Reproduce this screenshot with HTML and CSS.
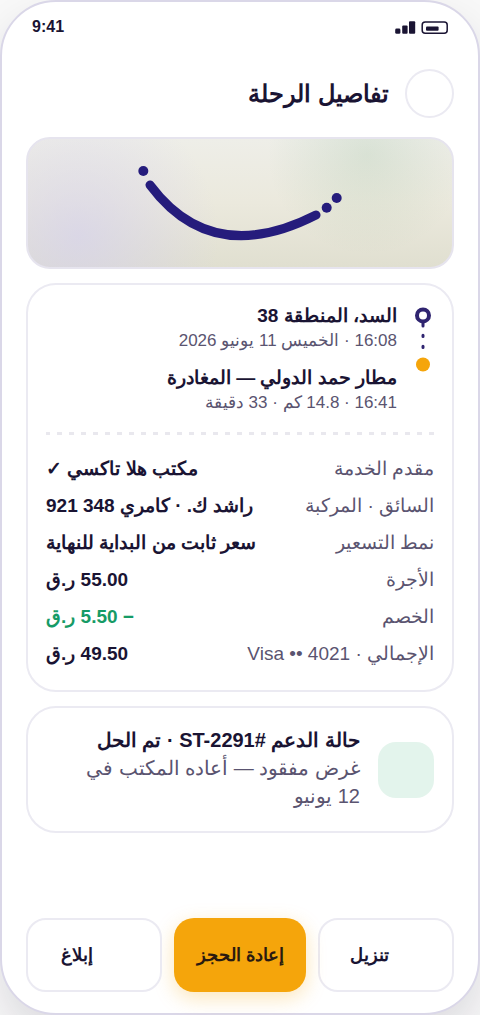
FILE: index.html
```html
<!DOCTYPE html>
<html lang="ar" dir="rtl">
<head>
<meta charset="utf-8">
<meta name="viewport" content="width=device-width, initial-scale=1">
<title>تفاصيل الرحلة</title>
<link rel="stylesheet" href="styles.css">
</head>
<body>
<div class="phone">
  <div class="status" dir="ltr">
    <span class="status-time">9:41</span>
    <svg class="status-icons" width="54" height="14" viewBox="0 0 54 14" aria-hidden="true">
      <rect x="1.2" y="8.6" width="5.2" height="5.2" rx="1.4"/>
      <rect x="8.2" y="5.6" width="5.4" height="8.2" rx="1"/>
      <rect x="15" y="1.2" width="6.2" height="12.6" rx="1"/>
      <rect x="28.2" y="2" width="25" height="11.2" rx="3" class="battery"/>
      <rect x="32" y="6.4" width="12.6" height="4.4" rx="1"/>
    </svg>
  </div>
  <header class="header">
    <button class="back" type="button" aria-label="رجوع"></button>
    <h1 class="title">تفاصيل الرحلة</h1>
  </header>
  <main class="content">
    <div class="map">
      <svg class="route" width="210" height="80" viewBox="0 0 210 80" aria-hidden="true">
        <path d="M15 22Q77 105 181 52" class="route-line"/>
        <circle cx="8.3" cy="8" r="5"/>
        <circle cx="191.7" cy="44.7" r="5"/>
        <circle cx="201.7" cy="35" r="5"/>
      </svg>
    </div>
    <section class="card">
      <div class="trip">
        <svg class="rail" width="22" height="68" viewBox="0 0 22 68" aria-hidden="true">
          <path d="M11 17v4M11 30.3v1.2M11 41.3v1.2" class="rail-dash"/>
          <circle cx="11" cy="10.4" r="6" class="rail-start"/>
          <circle cx="11" cy="59.5" r="7" class="rail-end"/>
        </svg>
        <div class="stops">
          <div class="stop">
            <p class="stop-name">السد، المنطقة 38</p>
            <p class="stop-meta">16:08 · الخميس 11 يونيو 2026</p>
          </div>
          <div class="stop">
            <p class="stop-name">مطار حمد الدولي — المغادرة</p>
            <p class="stop-meta">16:41 · 14.8 كم · 33 دقيقة</p>
          </div>
        </div>
      </div>
      <div class="divider"></div>
      <dl class="facts">
        <div class="fact"><dt>مقدم الخدمة</dt><dd>مكتب هلا تاكسي ✓</dd></div>
        <div class="fact"><dt>السائق · المركبة</dt><dd>راشد ك. · كامري <bdi>921 348</bdi></dd></div>
        <div class="fact"><dt>نمط التسعير</dt><dd>سعر ثابت من البداية للنهاية</dd></div>
        <div class="fact"><dt>الأجرة</dt><dd>55.00 ر.ق</dd></div>
        <div class="fact"><dt>الخصم</dt><dd class="discount">− 5.50 ر.ق</dd></div>
        <div class="fact"><dt>الإجمالي · <bdi>Visa •• 4021</bdi></dt><dd>49.50 ر.ق</dd></div>
      </dl>
    </section>
    <section class="card support">
      <span class="support-icon"></span>
      <div>
        <h2 class="support-title">حالة الدعم <bdi dir="ltr">ST-2291#</bdi> · تم الحل</h2>
        <p class="support-text">غرض مفقود — أعاده المكتب في 12&nbsp;يونيو</p>
      </div>
    </section>
  </main>
  <footer class="actions">
    <button class="btn btn-ghost" type="button"><span class="btn-icon"></span>تنزيل</button>
    <button class="btn btn-primary" type="button">إعادة الحجز</button>
    <button class="btn btn-ghost" type="button"><span class="btn-icon"></span>إبلاغ</button>
  </footer>
</div>
</body>
</html>
```
FILE: styles.css
```css
* {
  box-sizing: border-box;
}

body {
  margin: 0;
  background: #f8f8f8;
  color: #1a1433;
  font-family: "Liberation Sans", sans-serif;
}

h1, h2, p, dl, dd {
  margin: 0;
}

.phone {
  display: flex;
  flex-direction: column;
  min-height: 100vh;
  padding: 0 24px 21px;
  border: 2px solid #dad7e8;
  border-radius: 56px;
  background: #fff;
  box-shadow: 0 20px 40px rgba(26, 20, 51, 0.12);
}

.status {
  display: flex;
  align-items: center;
  justify-content: space-between;
  height: 50px;
  padding: 0 6px;
}

.status-time {
  font-size: 16px;
  font-weight: 700;
}

.status-icons {
  fill: #1a1433;
}

.battery {
  fill: none;
  stroke: #1a1433;
  stroke-width: 1.5;
}

.header {
  display: flex;
  align-items: center;
  gap: 16px;
  padding: 17px 0 19px;
}

.back {
  width: 49px;
  height: 49px;
  padding: 0;
  border: 2px solid #ebeaf2;
  border-radius: 50%;
  background: #fff;
}

.title {
  font-size: 24px;
  line-height: 32px;
}

.content {
  display: flex;
  flex-direction: column;
  gap: 14px;
}

.map {
  display: flex;
  align-items: center;
  justify-content: center;
  height: 132px;
  border: 2px solid #e6e4ee;
  border-radius: 24px;
  background:
    radial-gradient(circle at 80% 12%, rgba(80, 150, 100, 0.13), transparent 100px),
    radial-gradient(circle at 12% 76%, rgba(212, 208, 238, 0.65), transparent 140px),
    linear-gradient(#eeeee8, #ebe9dd 50%, #e0dfd0);
}

.route {
  fill: #251c7c;
}

.route-line {
  fill: none;
  stroke: #251c7c;
  stroke-width: 9;
  stroke-linecap: round;
}

.card {
  padding: 18px;
  border: 2px solid #ebeaf2;
  border-radius: 30px;
  background: #fff;
}

.trip {
  display: flex;
  gap: 15px;
}

.rail {
  flex: none;
  margin-top: 2px;
}

.rail-dash {
  stroke: #2f2470;
  stroke-width: 3;
  stroke-linecap: round;
}

.rail-start {
  fill: #fff;
  stroke: #2f2470;
  stroke-width: 4;
}

.rail-end {
  fill: #f5a50b;
}

.stops {
  display: flex;
  flex-direction: column;
  gap: 12px;
}

.stop-name {
  font-size: 19px;
  font-weight: 700;
  line-height: 25px;
}

.stop-meta {
  color: #5a5470;
  font-size: 17px;
  line-height: 25px;
}

.divider {
  height: 3px;
  margin: 17px 0 15px;
  background: repeating-linear-gradient(to left, #e9e8ee 0 5px, transparent 5px 12px);
}

.facts {
  font-size: 19px;
  line-height: 37px;
}

.fact {
  display: flex;
  justify-content: space-between;
}

.fact dt {
  color: #5a5470;
}

.fact dd {
  font-weight: 700;
}

.fact .discount {
  color: #169b66;
}

.support {
  display: flex;
  align-items: center;
  gap: 18px;
}

.support-icon {
  flex: none;
  width: 56px;
  height: 56px;
  border-radius: 18px;
  background: #e3f4ec;
}

.support-title {
  font-size: 20px;
  line-height: 28px;
}

.support-text {
  padding-bottom: 3px;
  color: #5a5470;
  font-size: 20px;
  line-height: 28px;
}

.actions {
  display: flex;
  gap: 12px;
  margin-top: auto;
}

.btn {
  display: flex;
  flex: 1 1 0;
  align-items: center;
  justify-content: center;
  gap: 10px;
  height: 74px;
  padding: 0;
  border: 0;
  border-radius: 20px;
  color: #1a1433;
  font-family: inherit;
  font-size: 18px;
  font-weight: 700;
  white-space: nowrap;
}

.btn-ghost {
  border: 2px solid #ebeaf2;
  background: #fff;
}

.btn-primary {
  background: #f5a50b;
  color: #2a1a10;
  box-shadow: 0 6px 20px rgba(245, 165, 11, 0.28);
}

.btn-icon {
  width: 24px;
  height: 24px;
}
```
